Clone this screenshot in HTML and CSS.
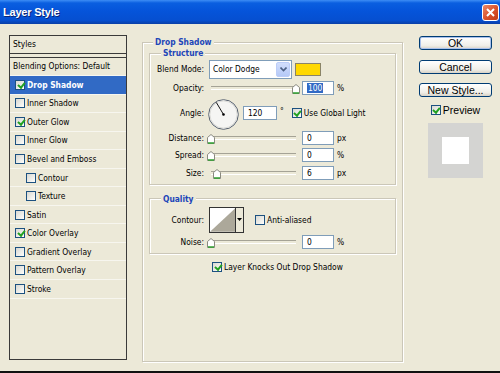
FILE: index.html
```html
<!DOCTYPE html>
<html lang="en">

<head>
    <meta charset="UTF-8">
    <title>Layer Style</title>
    <link rel="stylesheet" href="styles.css">
</head>

<body>
    <div class="window">
        <div class="titlebar">
            <span class="title">Layer Style</span>
            <span class="close">
                <svg width="9" height="9" viewBox="0 0 9 9"><path d="M1 1 L8 8 M8 1 L1 8" stroke="#fff" stroke-width="2"/></svg>
            </span>
        </div>

        <div class="body">
            <!-- left list of effects -->
            <div class="styles-panel">
                <div class="panel-head">Styles</div>
                <div class="panel-list">
                    <div class="panel-row">Blending Options: Default</div>
                    <ul class="style-list">
                        <li class="active"><span class="cb on"></span>Drop Shadow</li>
                        <li><span class="cb"></span>Inner Shadow</li>
                        <li><span class="cb on"></span>Outer Glow</li>
                        <li><span class="cb"></span>Inner Glow</li>
                        <li><span class="cb"></span>Bevel and Emboss</li>
                        <li class="sub"><span class="cb"></span>Contour</li>
                        <li class="sub"><span class="cb"></span>Texture</li>
                        <li><span class="cb"></span>Satin</li>
                        <li><span class="cb on"></span>Color Overlay</li>
                        <li><span class="cb"></span>Gradient Overlay</li>
                        <li><span class="cb"></span>Pattern Overlay</li>
                        <li><span class="cb"></span>Stroke</li>
                    </ul>
                </div>
            </div>

            <!-- settings for the selected effect -->
            <fieldset class="group main">
                <legend>Drop Shadow</legend>

                <fieldset class="group structure">
                    <legend>Structure</legend>

                    <div class="row blend">
                        <span class="label">Blend Mode:</span>
                        <div class="select">
                            <span class="select-text">Color Dodge</span>
                            <span class="drop">
                                <svg width="7" height="5" viewBox="0 0 7 5"><path d="M0.5 0.5 L3.5 3.5 L6.5 0.5" fill="none" stroke="#4d6185" stroke-width="1.6"/></svg>
                            </span>
                        </div>
                        <span class="color-swatch"></span>
                    </div>

                    <div class="row opacity">
                        <span class="label">Opacity:</span>
                        <div class="slider">
                            <span class="thumb" style="left: 88px">
                                <svg width="8" height="10" viewBox="0 0 8 10"><path d="M0.5 3.5 L4 0.5 L7.5 3.5 L7.5 9.5 L0.5 9.5 Z" fill="#fff" stroke="#8a8a80"/><path d="M1 9 L7 9" stroke="#2fa12f" stroke-width="1.5"/></svg>
                            </span>
                        </div>
                        <span class="field"><span class="selected">100</span></span>
                        <span class="unit">%</span>
                    </div>

                    <div class="row angle">
                        <span class="label">Angle:</span>
                        <svg class="dial" width="31" height="31" viewBox="0 0 31 31">
                            <circle cx="15.5" cy="15.5" r="14.8" fill="#f5f5f3" stroke="#56606e"/>
                            <circle cx="15.5" cy="15.5" r="13.6" fill="none" stroke="#dcdcd8"/>
                            <line x1="15.5" y1="15.5" x2="8.3" y2="3.4" stroke="#111" stroke-width="1"/>
                            <circle cx="15.5" cy="15.5" r="1.3" fill="#000"/>
                        </svg>
                        <span class="field angle-field">120</span>
                        <span class="unit degree">°</span>
                        <label class="check"><span class="cb on"></span>Use Global Light</label>
                    </div>

                    <div class="row">
                        <span class="label">Distance:</span>
                        <div class="slider">
                            <span class="thumb" style="left: 3px">
                                <svg width="8" height="10" viewBox="0 0 8 10"><path d="M0.5 3.5 L4 0.5 L7.5 3.5 L7.5 9.5 L0.5 9.5 Z" fill="#fff" stroke="#8a8a80"/><path d="M1 9 L7 9" stroke="#2fa12f" stroke-width="1.5"/></svg>
                            </span>
                        </div>
                        <span class="field">0</span>
                        <span class="unit">px</span>
                    </div>

                    <div class="row">
                        <span class="label">Spread:</span>
                        <div class="slider">
                            <span class="thumb" style="left: 3px">
                                <svg width="8" height="10" viewBox="0 0 8 10"><path d="M0.5 3.5 L4 0.5 L7.5 3.5 L7.5 9.5 L0.5 9.5 Z" fill="#fff" stroke="#8a8a80"/><path d="M1 9 L7 9" stroke="#2fa12f" stroke-width="1.5"/></svg>
                            </span>
                        </div>
                        <span class="field">0</span>
                        <span class="unit">%</span>
                    </div>

                    <div class="row">
                        <span class="label">Size:</span>
                        <div class="slider">
                            <span class="thumb" style="left: 9px">
                                <svg width="8" height="10" viewBox="0 0 8 10"><path d="M0.5 3.5 L4 0.5 L7.5 3.5 L7.5 9.5 L0.5 9.5 Z" fill="#fff" stroke="#8a8a80"/><path d="M1 9 L7 9" stroke="#2fa12f" stroke-width="1.5"/></svg>
                            </span>
                        </div>
                        <span class="field">6</span>
                        <span class="unit">px</span>
                    </div>
                </fieldset>

                <fieldset class="group quality">
                    <legend>Quality</legend>

                    <div class="row contour">
                        <span class="label">Contour:</span>
                        <div class="contour-box">
                            <svg width="26" height="24" viewBox="0 0 26 24"><rect width="26" height="24" fill="#fff"/><path d="M0 24 L26 0 L26 24 Z" fill="#aca89a"/></svg>
                            <span class="contour-drop">
                                <svg width="5" height="3" viewBox="0 0 5 3"><path d="M0 0 L5 0 L2.5 3 Z" fill="#000"/></svg>
                            </span>
                        </div>
                        <label class="check anti"><span class="cb"></span>Anti-aliased</label>
                    </div>

                    <div class="row noise">
                        <span class="label">Noise:</span>
                        <div class="slider">
                            <span class="thumb" style="left: 3px">
                                <svg width="8" height="10" viewBox="0 0 8 10"><path d="M0.5 3.5 L4 0.5 L7.5 3.5 L7.5 9.5 L0.5 9.5 Z" fill="#fff" stroke="#8a8a80"/><path d="M1 9 L7 9" stroke="#2fa12f" stroke-width="1.5"/></svg>
                            </span>
                        </div>
                        <span class="field">0</span>
                        <span class="unit">%</span>
                    </div>
                </fieldset>

                <label class="check knock"><span class="cb on"></span>Layer Knocks Out Drop Shadow</label>
            </fieldset>

            <!-- dialog buttons -->
            <div class="actions">
                <button class="btn default">OK</button>
                <button class="btn">Cancel</button>
                <button class="btn">New Style...</button>
                <label class="check preview-check"><span class="cb on"></span>Preview</label>
                <div class="preview">
                    <div class="preview-inner"></div>
                </div>
            </div>
        </div>
    </div>
</body>

</html>
```

FILE: styles.css
```css
* {
    box-sizing: border-box;
}

body {
    margin: 0;
    font-family: "DejaVu Sans Condensed", "DejaVu Sans", sans-serif;
    font-size: 8.4px;
    color: #000;
}

.window {
    width: 500px;
    height: 373px;
    background-color: #ece9d8;
    border-bottom: 2px solid #111;
    overflow: hidden;
}

/* XP blue title bar */
.titlebar {
    height: 24px;
    display: flex;
    align-items: center;
    justify-content: space-between;
    padding: 0 1px 0 3px;
    background: linear-gradient(#3d8df5 0, #0a5fe0 3px, #0554da 45%, #064fd0 85%, #0a3fa6 100%);
}

.title {
    color: #fff;
    font: bold 11px "Liberation Sans", sans-serif;
    letter-spacing: -0.2px;
    text-shadow: 1px 1px #0b2475;
}

.close {
    width: 17px;
    height: 17px;
    border: 1px solid #fff;
    border-radius: 3px;
    background: linear-gradient(135deg, #ec8a68, #d9502a 55%, #c13c16);
    display: flex;
    align-items: center;
    justify-content: center;
}

.body {
    display: flex;
    align-items: flex-start;
    padding: 11px 0 0 9px;
}

/* Left list */
.styles-panel {
    flex: none;
    width: 118px;
    height: 325px;
    border: 1px solid #3a3a3a;
}

.panel-head {
    height: 18px;
    padding-left: 3px;
    line-height: 17px;
    border-bottom: 1px solid #3a3a3a;
    margin-bottom: 3px;
}

.panel-list {
    border-top: 1px solid #3a3a3a;
}

.panel-row {
    height: 18px;
    padding-left: 3px;
    line-height: 17px;
    border-bottom: 1px solid #f7f6ef;
}

.style-list {
    list-style: none;
    margin: 0;
    padding: 0;
}

.style-list li {
    height: 18.55px;
    display: flex;
    align-items: center;
    padding-left: 5px;
    border-bottom: 1px solid #f7f6ef;
}

.style-list li.sub {
    padding-left: 16px;
}

.style-list li.active {
    background-color: #316ac5;
    color: #fff;
    font-weight: bold;
}

/* XP checkbox */
.cb {
    flex: none;
    position: relative;
    width: 10px;
    height: 10px;
    margin-right: 2px;
    border: 1px solid #1c5180;
    background: linear-gradient(135deg, #d8d8d2, #f6f6f3 80%, #fff);
}

.cb.on::after {
    content: "";
    position: absolute;
    left: 2.5px;
    top: 0;
    width: 2.5px;
    height: 5px;
    border-right: 2px solid #21a121;
    border-bottom: 2px solid #21a121;
    transform: rotate(40deg);
}

.check {
    display: flex;
    align-items: center;
}

/* Group boxes */
.group {
    margin: 0;
    padding: 0;
    min-width: 0;
    border: 1px solid #cbc7b8;
    box-shadow: 1px 1px 0 #fff, inset 1px 1px 0 #fff;
}

legend {
    padding: 0 2px;
    font-weight: bold;
    color: #2145b8;
    background-color: #ece9d8;
}

.main {
    flex: none;
    width: 261px;
    height: 325px;
    margin: 2px 0 0 15px;
    padding: 1px 6px 0 6px;
}

.main > legend {
    margin-left: 4px;
}

.structure,
.quality {
    padding-bottom: 2px;
}

.structure > legend,
.quality > legend {
    margin-left: 11px;
}

.quality {
    margin-top: 9px;
}

.row {
    display: flex;
    align-items: center;
    height: 17.6px;
}

.label {
    flex: none;
    width: 54px;
    margin-right: 5px;
    text-align: right;
}

.row.blend {
    height: 20px;
    margin-top: 1px;
}

.row.opacity {
    height: 18px;
}

.row.angle {
    height: 32px;
}

.row.contour {
    height: 26px;
    margin-top: 3px;
}

.row.noise {
    height: 18px;
}

/* Blend mode select */
.select {
    display: flex;
    align-items: center;
    width: 83px;
    height: 19px;
    padding: 1px;
    border: 1px solid #7f9db9;
    background-color: #fff;
}

.select-text {
    padding-left: 2px;
}

.drop {
    display: flex;
    align-items: center;
    justify-content: center;
    width: 14px;
    height: 15px;
    margin-left: auto;
    border: 1px solid #bccdf8;
    border-radius: 2px;
    background: linear-gradient(#d2defc, #b5c9f7);
}

.color-swatch {
    width: 26px;
    height: 13px;
    margin-left: 3px;
    border: 1px solid #8a8468;
    background-color: #ffd800;
}

/* Sliders */
.slider {
    flex: none;
    position: relative;
    width: 92px;
    height: 14px;
    margin-left: -1px;
}

.slider::before {
    content: "";
    position: absolute;
    left: 3px;
    right: 4px;
    top: 5px;
    height: 2px;
    border-top: 1px solid #a5a396;
    border-bottom: 1px solid #fff;
}

.thumb {
    position: absolute;
    top: 3px;
    margin-left: -4px;
    line-height: 0;
}

.field {
    flex: none;
    width: 32px;
    height: 14px;
    margin-left: 2px;
    padding-left: 4px;
    line-height: 12px;
    border: 1px solid #7f9db9;
    background-color: #fff;
}

.selected {
    display: inline-block;
    padding: 0 1px;
    background-color: #316ac5;
    color: #fff;
    line-height: 10px;
}

.unit {
    margin-left: 3px;
}

.dial {
    flex: none;
    margin: 3px 0 0 -1px;
}

.angle-field {
    width: 34px;
    margin-left: 4px;
}

.degree {
    margin: 0 0 4px 3px;
}

.angle .check {
    margin-left: 8px;
}

/* Contour picker */
.contour-box {
    display: flex;
    width: 35px;
    height: 26px;
    border: 1px solid #333;
    background-color: #fff;
}

.contour-drop {
    display: flex;
    align-items: center;
    justify-content: center;
    width: 8px;
    border-left: 1px solid #333;
    background-color: #ece9d8;
}

.anti {
    margin-left: 11px;
}

.knock {
    margin: 8px 0 0 63px;
}

/* Right column */
.actions {
    flex: none;
    width: 73px;
    margin: 1px 0 0 16px;
    display: flex;
    flex-direction: column;
    align-items: center;
}

.btn {
    width: 73px;
    height: 14px;
    margin: 0 0 9.5px 0;
    padding: 0;
    font: 10.5px "Liberation Sans", sans-serif;
    line-height: 12px;
    color: #000;
    border: 1px solid #003c74;
    border-radius: 3px;
    background: linear-gradient(#fff, #f0efe9 70%, #d8d2c6);
}

.btn.default {
    box-shadow: inset 0 0 0 1px #a9c1ec;
}

.preview-check {
    margin-top: -2.5px;
    font: 10.5px "Liberation Sans", sans-serif;
}

.preview {
    display: flex;
    align-items: center;
    justify-content: center;
    width: 55px;
    height: 55px;
    margin-top: 7px;
    background-color: #d4d4d2;
}

.preview-inner {
    width: 27px;
    height: 27px;
    background-color: #fff;
}
```
